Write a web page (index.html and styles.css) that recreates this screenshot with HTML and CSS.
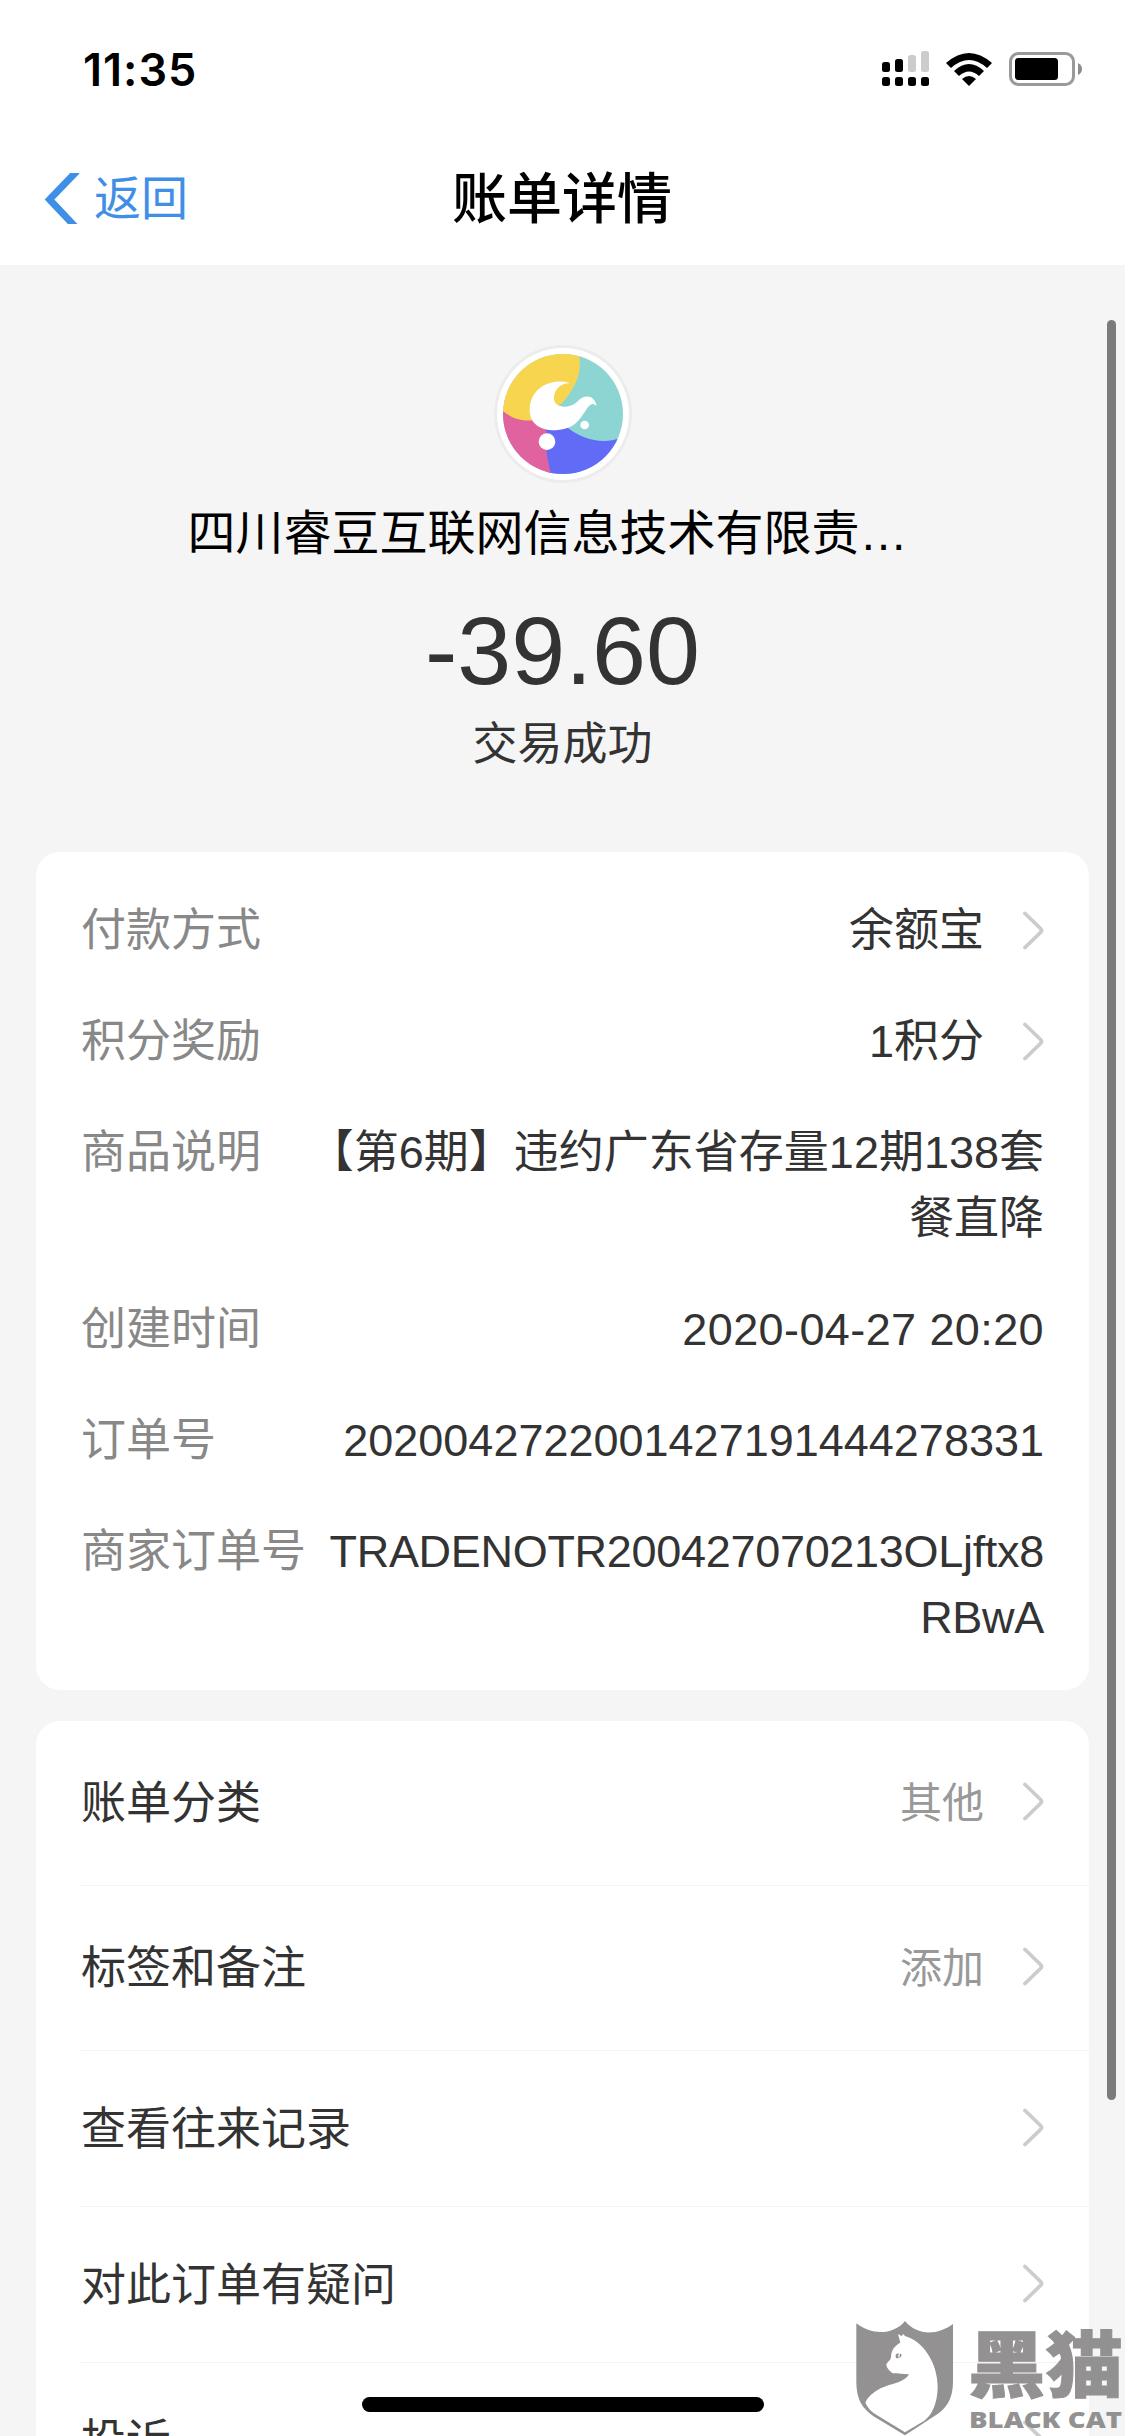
FILE: index.html
```html
<!DOCTYPE html>
<html lang="zh-CN">
<head>
    <meta charset="utf-8">
    <title>账单详情</title>
    <meta name="viewport" content="width=device-width, initial-scale=1">
    <link rel="stylesheet" href="styles.css">
</head>
<body>

<svg class="defs" width="0" height="0">
    <symbol id="arrow" viewBox="0 0 21 39">
        <path d="M2 2.500 L17.500 17.500 Q19.500 19.500 17.500 21.500 L2 36.500" fill="none" stroke="#ccc" stroke-width="3.800" stroke-linecap="round"/>
    </symbol>
</svg>

<div id="page">
    <header id="top">
        <div class="status-bar">
            <span class="clock">11:35</span>
            <div class="status-icons">
                <svg class="signal" width="47" height="36" viewBox="0 0 47 36">
                    <g fill="#ccc">
                        <rect x="26" y="4" width="8" height="17" rx="2.500"/>
                        <rect x="39" y="0" width="8" height="21" rx="2.500"/>
                    </g>
                    <rect x="0" y="11" width="8" height="10" rx="2.500"/>
                    <rect x="13" y="8" width="8" height="13" rx="2.500"/>
                    <rect x="0" y="26" width="8" height="9" rx="2.500"/>
                    <rect x="13" y="26" width="8" height="9" rx="2.500"/>
                    <rect x="26" y="26" width="8" height="9" rx="2.500"/>
                    <rect x="39" y="26" width="8" height="9" rx="2.500"/>
                </svg>
                <svg class="wifi" width="46" height="33" viewBox="0 0 46 33">
                    <path d="M0 10 Q23 -10 46 10 L41 15 Q23 -1 5 15 Z"/>
                    <path d="M8 18 Q23 4 38 18 L33 23 Q23 14 13 23 Z"/>
                    <path d="M16 26 Q23 20 30 26 L23 33 Z"/>
                </svg>
                <svg class="battery" width="74" height="34" viewBox="0 0 74 34">
                    <rect x="1.500" y="1.500" width="63" height="31" rx="8" fill="none" stroke="#9a9a9a" stroke-width="3"/>
                    <rect x="6" y="6" width="43" height="22" rx="3.500"/>
                    <path d="M69 11 Q73 13 73 17 Q73 21 69 23 Z" fill="#8c8c8c"/>
                </svg>
            </div>
        </div>
        <div class="nav">
            <a class="back">
                <svg width="36" height="51" viewBox="0 0 36 51">
                    <path d="M33 -2 L5.500 26.500 L31.500 54" fill="none" stroke="#3f8fe6" stroke-width="7"/>
                </svg>
                <span>返回</span>
            </a>
            <h1 class="title">账单详情</h1>
        </div>
    </header>

    <section id="summary">
        <svg class="logo" width="138" height="138" viewBox="0 0 414 414">
            <clipPath id="disc"><circle cx="207" cy="207" r="180"/></clipPath>
            <circle cx="207" cy="207" r="207" fill="#ececec"/>
            <circle cx="207" cy="207" r="198" fill="#fff"/>
            <g clip-path="url(#disc)">
                <rect width="414" height="414" fill="#8dd5d3"/>
                <path d="M155 240 L222 249 C272 286 330 301 390 275 V414 H165 C155 350 155 300 155 240 Z" fill="#616bf5"/>
                <path d="M0 180 L26 198 L150 205 L157 260 C154 310 160 355 176 400 L0 414 Z" fill="#e0639f"/>
                <path d="M0 0 H247 C270 65 255 115 204 175 L120 226 C75 229 45 215 24 195 L0 170 Z" fill="#f7d54e"/>
            </g>
            <path d="M229 115 C185 97 107 120 107 195 C107 240 145 257 185 256 C260 252 265 200 288 181 C296 174 302 177 308 184 C302 150 272 146 250 170 C225 193 180 190 180 160 C180 131 204 113 229 115 Z" fill="#fff"/>
            <circle cx="159" cy="290" r="25" fill="#fff"/>
            <circle cx="272" cy="240" r="13" fill="#fff"/>
        </svg>
        <div class="merchant">四川睿豆互联网信息技术有限责…</div>
        <div class="amount">-39.60</div>
        <div class="state">交易成功</div>
    </section>

    <section class="card details">
        <div class="row">
            <span class="label">付款方式</span>
            <span class="value">余额宝</span>
            <svg class="arrow"><use href="#arrow"/></svg>
        </div>
        <div class="row">
            <span class="label">积分奖励</span>
            <span class="value">1积分</span>
            <svg class="arrow"><use href="#arrow"/></svg>
        </div>
        <div class="row">
            <span class="label">商品说明</span>
            <span class="value">【第6期】违约广东省存量12期138套<br>餐直降</span>
        </div>
        <div class="row">
            <span class="label">创建时间</span>
            <span class="value date">2020-04-27 20:20</span>
        </div>
        <div class="row">
            <span class="label">订单号</span>
            <span class="value">2020042722001427191444278331</span>
        </div>
        <div class="row">
            <span class="label">商家订单号</span>
            <span class="value trade">TRADENOTR200427070213OLjftx8<br>RBwA</span>
        </div>
    </section>

    <section class="card menu">
        <div class="item tall">
            <span class="name">账单分类</span>
            <span class="hint">其他</span>
            <svg class="arrow"><use href="#arrow"/></svg>
        </div>
        <div class="item tall">
            <span class="name">标签和备注</span>
            <span class="hint">添加</span>
            <svg class="arrow"><use href="#arrow"/></svg>
        </div>
        <div class="item">
            <span class="name">查看往来记录</span>
            <svg class="arrow"><use href="#arrow"/></svg>
        </div>
        <div class="item">
            <span class="name">对此订单有疑问</span>
            <svg class="arrow"><use href="#arrow"/></svg>
        </div>
        <div class="item">
            <span class="name">投诉</span>
            <svg class="arrow"><use href="#arrow"/></svg>
        </div>
    </section>

    <div class="scrollbar"></div>
    <div class="home-bar"></div>

    <svg class="watermark" width="270" height="116" viewBox="0 0 270 116">
        <g transform="translate(-20 -20) scale(.33333)">
            <path d="M64 70 C110 106 175 106 210 63 C245 106 305 108 354 72 V245 C354 295 335 327 295 350 L210 406 L118 350 C80 325 64 295 64 245 Z" fill="#8f8d8e"/>
            <path d="M189 102 L200 108 L205 102 L210 108 C265 123 308 190 308 260 C308 310 290 345 268 362 L210 397 L125 345 C105 333 97 320 91 308 C100 286 128 266 160 256 C190 247 210 243 222 223 C205 221 190 223 173 220 C163 213 154 203 154 193 C159 184 167 181 168 172 C168 150 180 136 196 128 Z" fill="#fff"/>
            <path d="M182 165 Q187 158 193 162 L188 168 L193 172 Q185 179 182 171 Z M195 161 Q203 162 198 170 L193 174 Z" fill="#8f8d8e"/>
        </g>
        <text class="wm-cn" x="113" y="71" textLength="155" lengthAdjust="spacingAndGlyphs">黑猫</text>
        <text class="wm-en" x="114" y="108" textLength="153" lengthAdjust="spacingAndGlyphs">BLACK CAT</text>
    </svg>
</div>

</body>
</html>
```
FILE: styles.css
```css
html, body {
    margin: 0;
    padding: 0;
    background-color: #f5f5f5;
}

body {
    font-family: "Liberation Sans", "Noto Sans CJK SC", sans-serif;
    color: #333;
}

.defs {
    position: absolute;
}

#page {
    position: relative;
    width: 1125px;
    height: 2436px;
    overflow: hidden;
}

/* status bar + nav */
#top {
    height: 265px;
    background-color: #fff;
}

.status-bar {
    height: 138px;
    padding: 0 42px 0 83px;
    display: flex;
    justify-content: space-between;
    align-items: center;
}

.clock {
    font-family: Inter, sans-serif;
    font-size: 45px;
    font-weight: 600;
    letter-spacing: 1px;
    color: #000;
}

.status-icons {
    display: flex;
    align-items: center;
    gap: 17px;
}

.nav {
    height: 121px;
    padding: 0 45px 0 44px;
    display: grid;
    grid-template-columns: 1fr auto 1fr;
    align-items: center;
}

.back {
    display: flex;
    align-items: center;
    gap: 14px;
    font-size: 47px;
    line-height: 60px;
    color: #3f8fe6;
}

.title {
    margin: 0;
    font-size: 55px;
    line-height: 70px;
    font-weight: 500;
    color: #000;
}

/* merchant, amount, state */
#summary {
    height: 507px;
    padding-top: 80px;
    display: flex;
    flex-direction: column;
    align-items: center;
}

.merchant {
    width: 750px;
    margin-top: 18px;
    font-size: 48px;
    line-height: 66px;
    white-space: nowrap;
    color: #000;
}

.amount {
    margin-top: 29px;
    font-size: 97px;
    line-height: 110px;
}

.state {
    margin-top: 6px;
    font-size: 45px;
    line-height: 66px;
}

.card {
    margin: 0 36px;
    border-radius: 24px;
    background-color: #fff;
}

.arrow {
    width: 21px;
    height: 39px;
    margin-left: 39px;
    flex-shrink: 0;
}

/* payment details */
.details {
    height: 792px;
    padding: 46px 45px 0;
    display: flex;
    flex-direction: column;
    gap: 45px;
}

.row {
    display: flex;
    font-size: 45px;
    line-height: 66px;
}

.row .arrow {
    margin-top: 13px;
}

.label {
    color: #888;
}

.value {
    flex: 1;
    text-align: right;
    white-space: nowrap;
}

.date {
    letter-spacing: 0.4px;
}

.trade {
    letter-spacing: -0.3px;
}

/* menu list */
.menu {
    margin-top: 31px;
    padding-left: 45px;
}

.item {
    height: 149px;
    padding: 0 45px 6px 0;
    display: flex;
    align-items: center;
    border-bottom: 1px solid #f3f3f3;
    font-size: 45px;
}

.tall {
    height: 156px;
    padding-bottom: 8px;
}

.item .arrow {
    margin-top: 4px;
}

.name {
    flex: 1;
}

.hint {
    font-size: 42px;
    color: #999;
}

/* overlays */
.scrollbar {
    position: absolute;
    top: 320px;
    right: 9px;
    width: 9px;
    height: 1780px;
    border-radius: 5px;
    background-color: #7b7b7b;
}

.home-bar {
    position: absolute;
    left: 362px;
    bottom: 24px;
    width: 402px;
    height: 15px;
    border-radius: 8px;
    background-color: #000;
}

.watermark {
    position: absolute;
    right: 0;
    bottom: 0;
    opacity: 0.96;
}

.wm-cn, .wm-en {
    fill: #8f8d8e;
    font-weight: 900;
}

.wm-cn {
    font-family: "Noto Sans CJK SC", sans-serif;
    font-size: 72px;
    stroke: #8f8d8e;
    stroke-width: 1;
}

.wm-en {
    font-family: "Open Sans", "Liberation Sans", sans-serif;
    font-size: 23px;
}
```
